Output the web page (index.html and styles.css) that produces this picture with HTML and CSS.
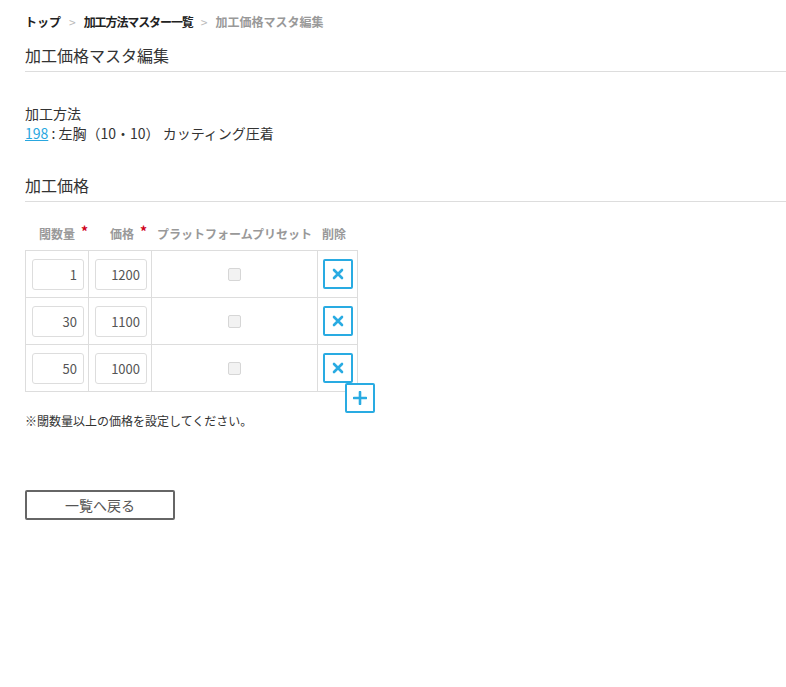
FILE: index.html
```html
<!DOCTYPE html>
<html lang="ja">
<head>
  <meta charset="utf-8">
  <title>加工価格マスタ編集</title>
  <link rel="stylesheet" href="styles.css">
</head>
<body>
  <div id="page">
    <!-- breadcrumb -->
    <ul class="breadcrumb">
      <li><a href="#">トップ</a></li>
      <li class="sep">&gt;</li>
      <li><a href="#" class="tight">加工方法マスター一覧</a></li>
      <li class="sep">&gt;</li>
      <li class="current">加工価格マスタ編集</li>
    </ul>

    <h1 class="pageTitle">加工価格マスタ編集</h1>

    <div class="methodInfo">
      <div class="methodLabel">加工方法</div>
      <div class="methodValue"><a href="#">198</a> : 左胸（10・10） カッティング圧着</div>
    </div>

    <h2 class="sectionTitle">加工価格</h2>

    <div class="priceTableWrap">
      <table class="priceTable">
        <colgroup>
          <col class="colQty">
          <col class="colPrice">
          <col class="colPreset">
          <col class="colDelete">
        </colgroup>
        <thead>
          <tr>
            <th><span class="req">閾数量</span></th>
            <th class="thPrice"><span class="req">価格</span></th>
            <th>プラットフォームプリセット</th>
            <th class="thDelete">削除</th>
          </tr>
        </thead>
        <tbody>
          <tr>
            <td><input type="text" value="1"></td>
            <td><input type="text" value="1200"></td>
            <td class="center"><input type="checkbox" disabled></td>
            <td class="center">
              <button class="iconBtn"><svg width="12" height="12" viewBox="0 0 12 12"><path d="M2 2L10 10M10 2L2 10" stroke="currentColor" stroke-width="2.6" stroke-linecap="round"/></svg></button>
            </td>
          </tr>
          <tr>
            <td><input type="text" value="30"></td>
            <td><input type="text" value="1100"></td>
            <td class="center"><input type="checkbox" disabled></td>
            <td class="center">
              <button class="iconBtn"><svg width="12" height="12" viewBox="0 0 12 12"><path d="M2 2L10 10M10 2L2 10" stroke="currentColor" stroke-width="2.6" stroke-linecap="round"/></svg></button>
            </td>
          </tr>
          <tr>
            <td><input type="text" value="50"></td>
            <td><input type="text" value="1000"></td>
            <td class="center"><input type="checkbox" disabled></td>
            <td class="center">
              <button class="iconBtn"><svg width="12" height="12" viewBox="0 0 12 12"><path d="M2 2L10 10M10 2L2 10" stroke="currentColor" stroke-width="2.6" stroke-linecap="round"/></svg></button>
            </td>
          </tr>
        </tbody>
      </table>
      <button class="iconBtn addBtn"><svg width="14" height="14" viewBox="0 0 14 14"><path d="M7 1V13M1 7H13" stroke="currentColor" stroke-width="2.6" stroke-linecap="round"/></svg></button>
    </div>

    <p class="note">※閾数量以上の価格を設定してください。</p>

    <button class="backBtn">一覧へ戻る</button>
  </div>
</body>
</html>
```

FILE: styles.css
```css
/* General Page Styling */
body {
  font-family: "Noto Sans CJK JP", "Noto Sans", sans-serif;
  margin: 0;
  padding: 0;
  background-color: #fff;
  color: #333;
}

#page {
  padding: 0 0 40px 25px;
}

/* Breadcrumb */
.breadcrumb {
  list-style: none;
  margin: 0;
  padding: 12px 0 0;
  display: flex;
  font-size: 12px;
  line-height: 20px;
  font-weight: bold;
}

.breadcrumb a {
  color: #222;
  text-decoration: none;
}

.breadcrumb .tight {
  letter-spacing: -1.1px;
}

.breadcrumb .sep {
  color: #bbb;
  font-weight: normal;
  margin: 0 8px;
}

.breadcrumb .current {
  color: #999;
}

/* Headings */
.pageTitle,
.sectionTitle {
  font-size: 16px;
  font-weight: normal;
  line-height: 24px;
  margin: 0;
  padding-bottom: 4px;
  border-bottom: 1px solid #ddd;
}

.pageTitle {
  margin-top: 11px;
}

.sectionTitle {
  margin-top: 30px;
}

/* Method info */
.methodInfo {
  margin-top: 31px;
  font-size: 14px;
  line-height: 20px;
}

.methodValue a {
  color: #29a7df;
}

/* Price table */
.priceTableWrap {
  position: relative;
  width: max-content;
  margin-top: 16px;
}

.priceTable {
  border-collapse: collapse;
  table-layout: fixed;
  width: 332px;
}

.colQty,
.colPrice {
  width: 63px;
}

.colPreset {
  width: 166px;
}

.colDelete {
  width: 40px;
}

.priceTable th {
  height: 30px;
  padding: 0 0 2px;
  font-size: 12px;
  font-weight: bold;
  color: #999;
  text-align: center;
  white-space: nowrap;
}

.priceTable th.thPrice {
  padding-left: 4px;
}

.priceTable th.thDelete {
  padding-right: 7px;
}

.req {
  position: relative;
}

.req::after {
  content: "*";
  position: absolute;
  right: -13px;
  top: -4px;
  color: #d0021b;
  font-size: 14px;
}

.priceTable td {
  border: 1px solid #ddd;
  height: 46px;
  padding: 0 6px;
  vertical-align: middle;
}

.priceTable td.center {
  padding: 0;
  text-align: center;
}

.priceTable input[type="text"] {
  box-sizing: border-box;
  width: 52px;
  height: 31px;
  padding: 0 6px;
  border: 1px solid #ddd;
  border-radius: 3px;
  font-family: inherit;
  font-size: 13px;
  color: #555;
  text-align: right;
  display: block;
}

.priceTable input[type="checkbox"] {
  appearance: none;
  display: block;
  width: 13px;
  height: 13px;
  margin: 0 auto;
  border: 1px solid #d6d6d6;
  border-radius: 2px;
  background: #f2f2f2;
}

.iconBtn {
  box-sizing: border-box;
  width: 30px;
  height: 30px;
  padding: 0;
  border: 2px solid #29abe2;
  border-radius: 2px;
  background: #fff;
  color: #29abe2;
  cursor: pointer;
  display: inline-flex;
  align-items: center;
  justify-content: center;
  vertical-align: middle;
}

.addBtn {
  position: absolute;
  right: -17px;
  bottom: -21px;
}

.note {
  margin: 19px 0 0;
  font-size: 12px;
  line-height: 20px;
}

.backBtn {
  box-sizing: border-box;
  margin-top: 59px;
  width: 150px;
  height: 30px;
  padding: 0;
  background: #fff;
  border: 2px solid #666;
  border-radius: 2px;
  font-family: inherit;
  font-size: 14px;
  color: #555;
  cursor: pointer;
}
```
